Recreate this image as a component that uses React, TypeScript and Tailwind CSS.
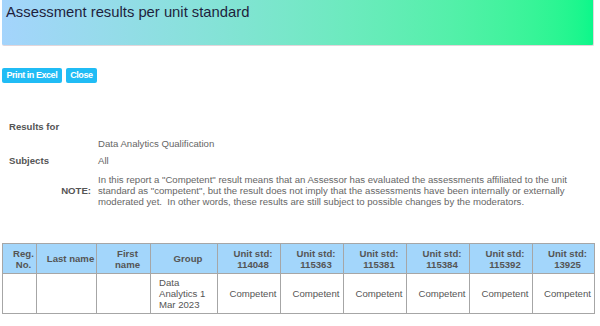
import React from "react";

const cols = [34, 60, 54, 67, 63, 63, 63, 63, 63, 62];
const units = ["114048", "115363", "115381", "115384", "115392", "13925"];

export default function App() {
  return (
    <div className="w-[600px] h-[326px] bg-white overflow-hidden font-['Liberation_Sans',Arial,sans-serif]">
      <div className="ml-[2px] w-[592px] h-[46px] border-r border-b border-[#e2d6da] rounded-b-[2px] bg-gradient-to-r from-[#a4d4fc] to-[#0af78a] pl-[4px] pt-[3px]">
        <h1 className="text-[14.8px] leading-[18px] text-[#1e1f3d]">Assessment results per unit standard</h1>
      </div>
      <div className="flex gap-[4px] ml-[2px] mt-[22px]">
        <button className="h-[15px] px-[4.5px] text-[9px] tracking-[-0.45px] font-bold text-white bg-[#20bcf5] rounded-[2px] leading-[15px]">Print in Excel</button>
        <button className="h-[15px] px-[4.5px] text-[9px] tracking-[-0.45px] font-bold text-white bg-[#20bcf5] rounded-[2px] leading-[15px]">Close</button>
      </div>
      <div className="mt-[35px] ml-[9px] grid grid-cols-[89px_482px] text-[9.6px] leading-[17px] text-[#666]">
        <div className="font-bold text-[#555]">Results for</div>
        <div></div>
        <div></div>
        <div>Data Analytics Qualification</div>
        <div className="font-bold text-[#555]">Subjects</div>
        <div>All</div>
        <div className="mt-[5px] flex items-center justify-end pr-[7px] font-bold text-[#555]">NOTE:</div>
        <div className="mt-[5px] leading-[11px]">
          In this report a "Competent" result means that an Assessor has evaluated the assessments affiliated to the unit standard as "competent", but the result does not imply that the assessments have been internally or externally moderated yet.&nbsp; In other words, these results are still subject to possible changes by the moderators.
        </div>
      </div>
      <table className="mt-[36px] ml-[2px] w-[592px] table-fixed border-collapse text-[9.6px] leading-[11px] text-[#555]">
        <colgroup>
          {cols.map((w, i) => (
            <col key={i} style={{ width: w }} />
          ))}
        </colgroup>
        <thead>
          <tr className="h-[30px] bg-[#a3d6fb]">
            <th className="border border-[#a6a6a6] pl-[8px] pr-0 font-bold text-center">Reg.<br />No.</th>
            <th className="border border-[#a6a6a6] pl-[8px] pr-0 font-bold text-center">Last name</th>
            <th className="border border-[#a6a6a6] pl-[8px] pr-0 font-bold text-center">First<br />name</th>
            <th className="border border-[#a6a6a6] pl-[8px] pr-0 font-bold text-center">Group</th>
            {units.map((u) => (
              <th key={u} className="border border-[#a6a6a6] pl-[8px] pr-0 font-bold text-center">Unit std:<br />{u}</th>
            ))}
          </tr>
        </thead>
        <tbody>
          <tr className="h-[40px]">
            <td className="border border-[#a6a6a6]"></td>
            <td className="border border-[#a6a6a6]"></td>
            <td className="border border-[#a6a6a6]"></td>
            <td className="border border-[#a6a6a6] pl-[8px] pr-[2px] text-left">Data Analytics 1 Mar 2023</td>
            {units.map((u) => (
              <td key={u} className="border border-[#a6a6a6] pl-[8px] pr-0 text-center">Competent</td>
            ))}
          </tr>
        </tbody>
      </table>
    </div>
  );
}
